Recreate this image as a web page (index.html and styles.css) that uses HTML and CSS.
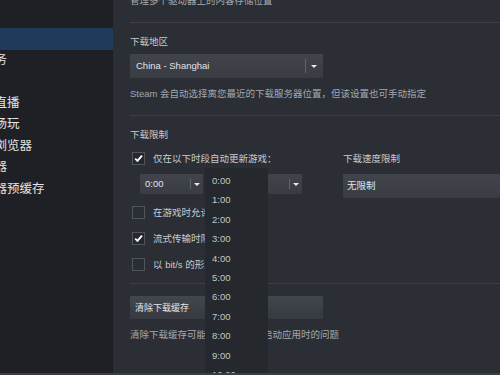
FILE: index.html
```html
<!DOCTYPE html>
<html lang="zh-CN">
<head>
    <meta charset="UTF-8">
    <meta name="viewport" content="width=device-width, initial-scale=1.0">
    <title>Steam - 设置 - 下载</title>
    <link rel="stylesheet" href="styles.css">
</head>
<body>
    <div class="window">
        <nav class="sidebar">
            <ul class="menu">
                <li>帐户</li>
                <li>库</li>
                <li class="active">云</li>
                <li>服务</li>
                <li>盘</li>
                <li>看直播</li>
                <li>远场玩</li>
                <li>网浏览器</li>
                <li>机器</li>
                <li>着器预缓存</li>
            </ul>
        </nav>

        <main class="panel">
            <p class="hint top-hint">管理多个驱动器上的内容存储位置</p>
            <hr class="divider">

            <h4 class="label">下载地区</h4>
            <div class="select region">
                <span class="select-text">China - Shanghai</span>
                <span class="select-arrow"></span>
            </div>
            <p class="hint">Steam 会自动选择离您最近的下载服务器位置，但该设置也可手动指定</p>
            <hr class="divider">

            <h4 class="label">下载限制</h4>
            <div class="limits">
                <div class="limits-left">
                    <label class="check">
                        <span class="box checked">
                            <svg viewBox="0 0 13 13"><path d="M2.6 6.6 L5.3 9.4 L10.6 3.2" stroke="#fff" stroke-width="2.2" fill="none"/></svg>
                        </span>
                        仅在以下时段自动更新游戏：
                    </label>

                    <div class="times">
                        <div class="select time">
                            <span class="select-text">0:00</span>
                            <span class="select-arrow"></span>
                        </div>
                        <div class="select time">
                            <span class="select-text">0:00</span>
                            <span class="select-arrow"></span>
                        </div>
                        <ul class="time-list">
                            <li>0:00</li>
                            <li>1:00</li>
                            <li>2:00</li>
                            <li>3:00</li>
                            <li>4:00</li>
                            <li>5:00</li>
                            <li>6:00</li>
                            <li>7:00</li>
                            <li>8:00</li>
                            <li>9:00</li>
                            <li>10:00</li>
                            <li>11:00</li>
                        </ul>
                    </div>

                    <label class="check spaced">
                        <span class="box"></span>
                        在游戏时允许下载
                    </label>
                    <label class="check">
                        <span class="box checked">
                            <svg viewBox="0 0 13 13"><path d="M2.6 6.6 L5.3 9.4 L10.6 3.2" stroke="#fff" stroke-width="2.2" fill="none"/></svg>
                        </span>
                        流式传输时限制下载
                    </label>
                    <label class="check">
                        <span class="box"></span>
                        以 bit/s 的形式显示速率
                    </label>
                </div>

                <div class="limits-right">
                    <h4 class="label speed-label">下载速度限制</h4>
                    <div class="select speed">
                        <span class="select-text">无限制</span>
                    </div>
                </div>
            </div>
            <hr class="divider">

            <button class="button">清除下载缓存</button>
            <p class="hint">清除下载缓存可能会解决下载或启动应用时的问题</p>
        </main>
    </div>
</body>
</html>
```

FILE: styles.css
```css
body {
    margin: 0;
    background-color: #1e2025;
    font-family: "Liberation Sans", "Noto Sans CJK SC", sans-serif;
    color: #c4c8cc;
}
.window {
    display: grid;
    grid-template-columns: 113px 1fr;
    height: 373px;
    border-bottom: 2px solid #3a3d43;
    overflow: hidden;
}

/* 左侧菜单 */
.sidebar {
    background-color: #1e2025;
    overflow: hidden;
}
.menu {
    list-style: none;
    margin: -14.75px 0 0;
    padding: 0;
}
.menu li {
    height: 21.5px;
    line-height: 21.5px;
    font-size: 12.5px;
    color: #e2e4e6;
    text-indent: -18px;
    white-space: nowrap;
    overflow: hidden;
}
.menu li.active {
    background-color: #1e3b5c;
}

/* 右侧设置面板 */
.panel {
    background-color: #2b2e34;
    padding-left: 17px;
    font-size: 9.5px;
    line-height: 12px;
    overflow: hidden;
    white-space: nowrap;
}
.hint {
    margin: 10px 0 0;
    color: #a3a9af;
}
.top-hint {
    margin-top: -5px;
}
.divider {
    border: 0;
    border-top: 1px solid #3c3f46;
    margin: 12px 0 0;
}
.hint + .divider {
    margin-top: 15px;
}
.label {
    margin: 15px 0 0;
    font-size: 9.5px;
    font-weight: normal;
    color: #c8ccd0;
}
.divider + .label + .limits {
    margin-top: 11px;
}
.hint + .divider + .label {
    margin-top: 13px;
}

.select {
    display: flex;
    align-items: center;
    background: linear-gradient(#41444c, #393c43);
    color: #e0e3e6;
}
.select-text {
    flex: 1;
    padding-left: 6px;
}
.select-arrow {
    position: relative;
    align-self: stretch;
    width: 18px;
}
.select-arrow::before {
    content: "";
    position: absolute;
    left: 0;
    top: 5px;
    bottom: 5px;
    border-left: 1px solid #60646b;
}
.select-arrow::after {
    content: "";
    position: absolute;
    left: 6px;
    top: 50%;
    margin-top: -1px;
    border-left: 3px solid transparent;
    border-right: 3px solid transparent;
    border-top: 3px solid #e8eaec;
}
.region {
    width: 193px;
    height: 24px;
    margin-top: 6px;
}

.limits {
    display: grid;
    grid-template-columns: 213px 1fr;
}
.check {
    display: flex;
    align-items: center;
    gap: 8px;
    height: 13px;
    margin: 13px 0 0 2px;
    color: #c8ccd0;
}
.limits-left .check:first-child {
    margin-top: 0;
}
.check.spaced {
    margin-top: 12px;
}
.box {
    flex: none;
    width: 11px;
    height: 11px;
    border: 1px solid #50545b;
    background-color: #2a2d33;
}
.box svg {
    display: block;
    width: 11px;
    height: 11px;
}
.box.checked {
    background-color: #24272d;
}

.times {
    position: relative;
    display: flex;
    gap: 36px;
    margin: 9px 0 0 10px;
}
.time {
    width: 63px;
    height: 20px;
}
.time .select-text {
    padding-left: 5px;
}
.time .select-arrow {
    width: 13px;
}
.time .select-arrow::after {
    left: 4px;
}
.time-list {
    position: absolute;
    left: 65px;
    top: -6px;
    width: 56px;
    margin: 0;
    padding: 3px 0 0 7px;
    list-style: none;
    background-color: #25282d;
    color: #c3c7cb;
    line-height: 19.4px;
}

.speed-label {
    margin-top: 1px;
}
.speed {
    height: 24px;
    margin-top: 9px;
}
.speed .select-text {
    padding-left: 4px;
}

.button {
    display: block;
    width: 193px;
    height: 23px;
    margin-top: 12px;
    padding: 0 0 0 5px;
    border: 0;
    background: linear-gradient(#42464e, #363940);
    color: #e4e7ea;
    font-family: inherit;
    font-size: 9px;
    text-align: left;
}
.button + .hint {
    margin-top: 10px;
}
```
